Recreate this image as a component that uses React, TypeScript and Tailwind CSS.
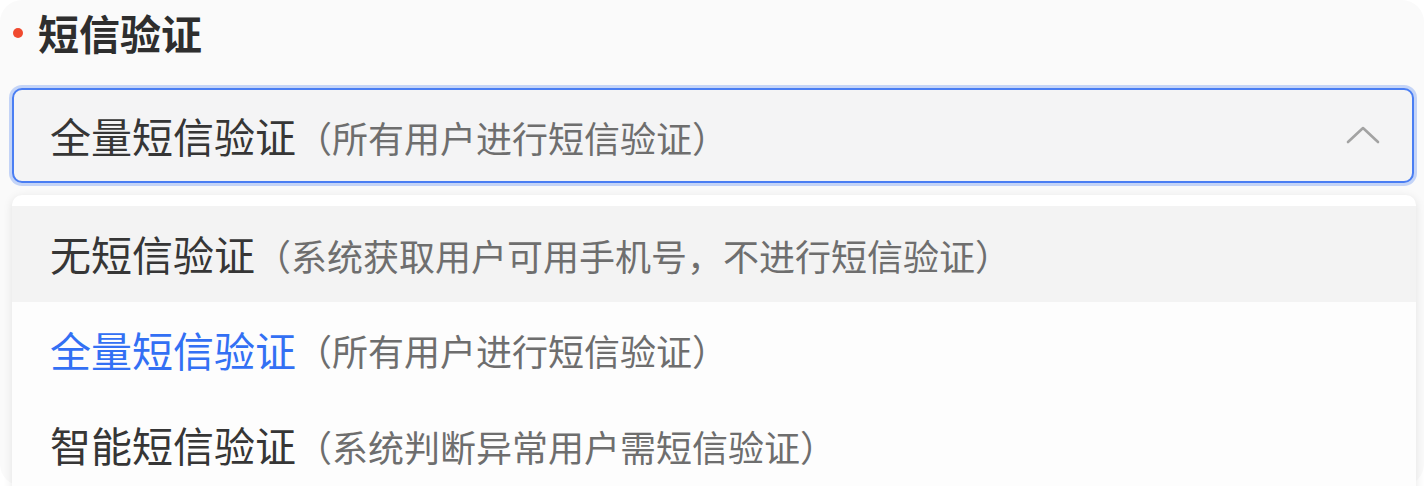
import { useState } from "react"

type Option = {
  value: string
  label: string
  hint: string
}

const options: Option[] = [
  { value: "none", label: "无短信验证", hint: "（系统获取用户可用手机号，不进行短信验证）" },
  { value: "all", label: "全量短信验证", hint: "（所有用户进行短信验证）" },
  { value: "smart", label: "智能短信验证", hint: "（系统判断异常用户需短信验证）" },
]

const font = { fontFamily: '"Noto Sans CJK SC", "Noto Sans", sans-serif' }

export default function App() {
  const [selected, setSelected] = useState("all")
  const [hovered, setHovered] = useState("none")
  const current = options.find((o) => o.value === selected)!

  return (
    <div className="w-[1424px] h-[486px] bg-white overflow-hidden" style={font}>
      <div className="h-full rounded-[22px] bg-[#fafafa] pl-[12px] pr-[10px] pt-[7px]">
        {/* label */}
        <div className="flex items-center h-[50px]">
          <span className="w-[10px] h-[10px] rounded-full bg-[#f04a2f] ml-[1px] mr-[15px] mt-[2px]" />
          <span className="text-[41px] leading-none font-bold text-[#2e2e2e]">短信验证</span>
        </div>

        {/* select trigger */}
        <button className="mt-[31px] w-full h-[95px] flex items-center justify-between rounded-[10px] border-2 border-[#4a7ef3] bg-[#f4f4f5] shadow-[0_0_0_3px_rgba(74,126,243,0.3)] pl-[36px] pr-[32px] text-left">
          <span className="flex items-baseline">
            <span className="text-[41px] leading-none text-[#363636]">{current.label}</span>
            <span className="text-[36px] leading-none text-[#6e6e6e]">{current.hint}</span>
          </span>
          <svg width="34" height="20" viewBox="0 0 34 20" fill="none" className="mb-[2px]">
            <polyline points="2,17 17,3 32,17" stroke="#a3a3a3" strokeWidth="2.6" strokeLinecap="round" strokeLinejoin="round" />
          </svg>
        </button>

        {/* dropdown panel */}
        <div className="mt-[12px] bg-white rounded-[10px] shadow-[0_2px_10px_rgba(0,0,0,0.10)] pt-[11px] pb-[10px] w-[1404px]">
          {options.map((o) => {
            const active = o.value === selected
            return (
              <div
                key={o.value}
                onMouseEnter={() => setHovered(o.value)}
                onClick={() => setSelected(o.value)}
                className={`h-[95.5px] flex items-center pl-[38px] cursor-pointer ${hovered === o.value ? "bg-[#f3f3f3]" : "bg-[#fdfdfd]"}`}
              >
                <span className={`text-[41px] leading-none ${active ? "text-[#3370f4]" : "text-[#363636]"}`}>{o.label}</span>
                <span className="text-[36px] leading-none text-[#6e6e6e] mt-[2px]">{o.hint}</span>
              </div>
            )
          })}
        </div>
      </div>
    </div>
  )
}
